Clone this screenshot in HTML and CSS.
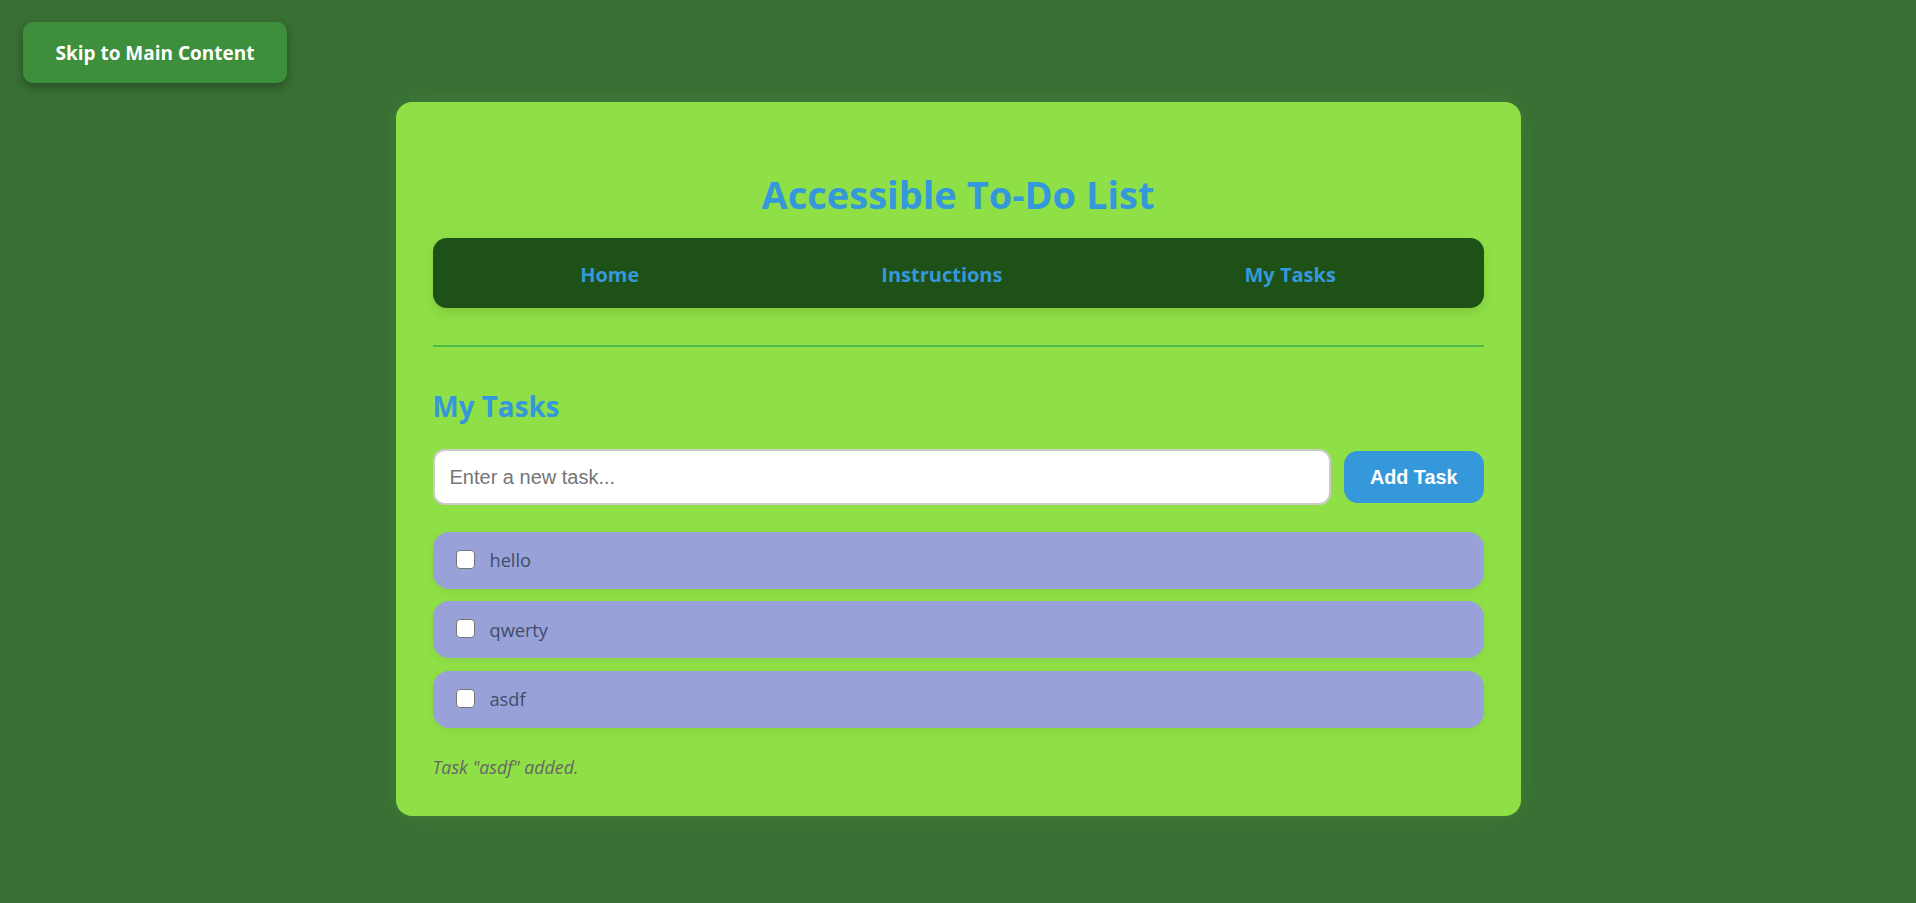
FILE: index.html
```html
<!DOCTYPE html>
<html lang="en">
<head>
<meta charset="utf-8">
<title>Accessible To-Do List</title>
<link rel="stylesheet" href="styles.css">
</head>
<body>
<a class="skip-link" href="#main">Skip to Main Content</a>
<div class="card">
  <h1 class="title">Accessible To-Do List</h1>
  <nav class="nav" aria-label="Main">
    <a class="nav-link" href="#home">Home</a>
    <a class="nav-link" href="#instructions">Instructions</a>
    <a class="nav-link" href="#tasks">My Tasks</a>
  </nav>
  <div class="divider"></div>
  <main id="main" class="tasks-section">
    <h2 class="section-title">My Tasks</h2>
    <form class="add-form">
      <input class="task-input" type="text" placeholder="Enter a new task..." aria-label="New task">
      <button class="add-btn" type="button">Add Task</button>
    </form>
    <ul class="task-list">
      <li class="task"><input class="task-check" type="checkbox" aria-label="hello"><span class="task-text">hello</span></li>
      <li class="task"><input class="task-check" type="checkbox" aria-label="qwerty"><span class="task-text">qwerty</span></li>
      <li class="task"><input class="task-check" type="checkbox" aria-label="asdf"><span class="task-text">asdf</span></li>
    </ul>
    <p class="status" role="status">Task "asdf" added.</p>
  </main>
</div>
</body>
</html>
```

FILE: styles.css
```css
* { box-sizing: border-box; }

body {
  margin: 0;
  background: #386f33;
  font-family: "Open Sans", "Noto Sans", sans-serif;
  min-height: 903px;
}

.skip-link {
  position: absolute;
  left: 23px;
  top: 22px;
  width: 264px;
  height: 61px;
  padding-top: 19px;
  line-height: 25px;
  font-size: 19px;
  font-weight: 700;
  text-align: center;
  color: #ffffff;
  background: #3e8f3c;
  border-radius: 10px;
  text-decoration: none;
  box-shadow: 0 4px 10px rgba(0, 0, 0, 0.3);
}

.card {
  width: 1125px;
  margin: 102px auto 0;
  padding: 37px;
  background: #8fe046;
  border-radius: 16px;
  box-shadow: 0 0 22px rgba(120, 200, 90, 0.18);
}

.title {
  margin: 33px 0 21px;
  font-size: 38px;
  line-height: 45px;
  font-weight: 700;
  text-align: center;
  color: #3498db;
}

.nav {
  display: flex;
  justify-content: center;
  align-items: center;
  gap: 242px;
  height: 70px;
  padding-top: 3px;
  background: #1d5118;
  border-radius: 14px;
  box-shadow: 0 5px 12px rgba(0, 0, 0, 0.1);
}

.nav-link {
  font-size: 20px;
  line-height: 24px;
  font-weight: 700;
  color: #3498db;
  text-decoration: none;
}

.divider {
  height: 2px;
  margin-top: 37px;
  background: #4cbb4c;
}

.section-title {
  margin: 42.5px 0 26.5px;
  font-size: 27.8px;
  line-height: 33px;
  font-weight: 700;
  color: #3498db;
}

.add-form {
  display: flex;
  align-items: center;
  gap: 13px;
  margin: 0;
}

.task-input {
  flex: 1;
  height: 56px;
  padding: 0 15px;
  border: 2px solid #cccccc;
  border-radius: 12px;
  background: #ffffff;
  font-family: "Liberation Sans", Arial, sans-serif;
  font-size: 20px;
  color: #333;
}

.task-input::placeholder {
  color: #757575;
}

.add-btn {
  height: 52px;
  padding: 0 26px;
  border: none;
  border-radius: 14px;
  background: #3598db;
  color: #ffffff;
  font-family: "Liberation Sans", Arial, sans-serif;
  font-size: 19.8px;
  font-weight: 700;
}

.task-list {
  list-style: none;
  margin: 26.5px 0 0;
  padding: 0;
  display: flex;
  flex-direction: column;
  gap: 12.5px;
}

.task {
  display: flex;
  align-items: center;
  height: 57px;
  padding-left: 23px;
  background: #98a2d8;
  border-radius: 16px;
  box-shadow: 0 3px 10px rgba(0, 0, 0, 0.06);
}

.task-check {
  appearance: none;
  -webkit-appearance: none;
  width: 19px;
  height: 19px;
  margin: -2px 15px 0 0;
  background: #ffffff;
  border: 1.5px solid #767676;
  border-radius: 4px;
}

.task-text {
  font-size: 18.2px;
  line-height: 24px;
  color: #414c6a;
}

.status {
  margin: 28px 0 1.5px;
  font-size: 17.8px;
  line-height: 22px;
  font-style: italic;
  color: #666666;
}
```
